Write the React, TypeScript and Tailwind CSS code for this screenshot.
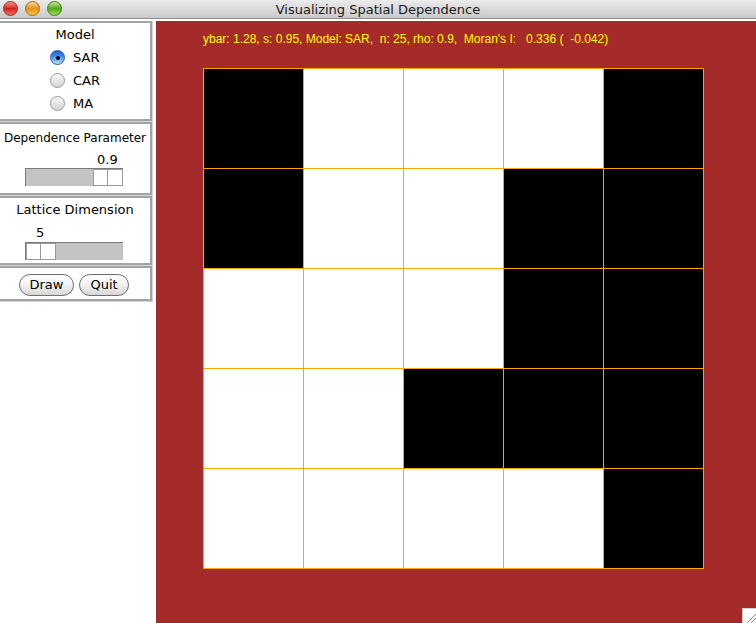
import React from "react"

const ui = { fontFamily: '"DejaVu Sans", "Liberation Sans", sans-serif' }
const canvasFont = { fontFamily: '"Liberation Sans", Arial, sans-serif' }

const pattern = [
  [1, 0, 0, 0, 1],
  [1, 0, 0, 1, 1],
  [0, 0, 0, 1, 1],
  [0, 0, 1, 1, 1],
  [0, 0, 0, 0, 1],
]

function Light({ color }: { color: "red" | "orange" | "green" }) {
  const fill =
    color === "red"
      ? "border-[#9c302a] from-[#f08c86] via-[#d8201a] to-[#f06a5a]"
      : color === "orange"
        ? "border-[#a06a14] from-[#f8d890] via-[#e49010] to-[#f8c44a]"
        : "border-[#467c1c] from-[#c4ec98] via-[#54a814] to-[#9cdc58]"
  return <div className={`h-[15px] w-[15px] rounded-full border bg-linear-to-b ${fill}`} />
}

function Radio({ label, checked }: { label: string; checked?: boolean }) {
  return (
    <div className="flex h-[23px] items-center gap-[8px] pl-[50px]">
      {checked ? (
        <div className="flex h-[15px] w-[15px] items-center justify-center rounded-full border border-[#2e5ea8] bg-linear-to-b from-[#1c5fd0] via-[#4f96ec] to-[#b8e2ff]">
          <div className="h-[4px] w-[4px] rounded-full bg-black" />
        </div>
      ) : (
        <div className="h-[15px] w-[15px] rounded-full border border-[#9a9a9a] bg-linear-to-b from-[#fafafa] to-[#d4d4d4]" />
      )}
      <span className="text-[13px] text-black">{label}</span>
    </div>
  )
}

function Panel({ children, className }: { children: React.ReactNode; className?: string }) {
  return (
    <div className="border-r-[1px] border-b-[1px] border-[#d6d6d6]">
      <div className={`border-y-2 border-r-2 border-[#a3a3a3] bg-white ${className ?? ""}`}>{children}</div>
    </div>
  )
}

function Slider({ thumbLeft }: { thumbLeft: boolean }) {
  return (
    <div className="ml-[25px] flex h-[18px] w-[98px] border-t border-l border-[#7a7a7a] bg-[#c4c4c4]">
      {thumbLeft ? null : <div className="flex-1" />}
      <div className="flex h-full">
        <div className="w-[15px] border border-[#9a9a9a] bg-white" />
        <div className="w-[15px] border border-l-0 border-[#9a9a9a] bg-white" />
      </div>
      {thumbLeft ? <div className="flex-1" /> : null}
    </div>
  )
}

function Button({ label, w }: { label: string; w: string }) {
  return (
    <div
      className={`${w} flex h-[22px] items-center justify-center rounded-full border border-[#6e6e6e] bg-linear-to-b from-white via-[#f2f2f2] to-[#d6d6d6] text-[13px] text-black`}
    >
      {label}
    </div>
  )
}

export default function App() {
  return (
    <div className="relative flex h-[623px] w-[756px] flex-col overflow-hidden bg-white" style={ui}>
      <div className="relative flex h-[19px] items-center border-b border-[#8d8d8d] bg-linear-to-b from-[#ececec] to-[#c9c9c9]">
        <div className="absolute left-[3px] top-[1px] flex gap-[7px]">
          <Light color="red" />
          <Light color="orange" />
          <Light color="green" />
        </div>
        <div className="w-full pt-[1px] text-center text-[13px] text-[#1a1a1a]">Visualizing Spatial Dependence</div>
      </div>
      <div className="flex flex-1 pt-[2px]">
        <div className="w-[156px] pr-[3px]">
          <Panel className="h-[100px] pt-[4px]">
            <div className="mb-[3px] text-center text-[13px] leading-[16px] text-black">Model</div>
            <Radio label="SAR" checked />
            <Radio label="CAR" />
            <Radio label="MA" />
          </Panel>
          <Panel className="h-[73px] pt-[6px]">
            <div className="text-center text-[12px] leading-[16px] text-black">Dependence Parameter</div>
            <div className="mt-[6px] pl-[97px] text-[13px] leading-[16px] text-black">0.9</div>
            <div className="mt-0">
              <Slider thumbLeft={false} />
            </div>
          </Panel>
          <Panel className="h-[69px] pt-[4px]">
            <div className="text-center text-[13px] leading-[16px] text-black">Lattice Dimension</div>
            <div className="mt-[7px] pl-[36px] text-[13px] leading-[16px] text-black">5</div>
            <div className="mt-[1px]">
              <Slider thumbLeft />
            </div>
          </Panel>
          <Panel className="flex h-[35px] items-start gap-[5px] pt-[6px] pl-[19px]">
            <Button label="Draw" w="w-[55px]" />
            <Button label="Quit" w="w-[50px]" />
          </Panel>
        </div>
        <div className="relative flex-1 bg-[#a52a2a] pl-[47px] pt-[11px]" style={canvasFont}>
          <div className="whitespace-pre text-[12px] leading-[14px] text-[#ffff00]">
            {"ybar: 1.28, s: 0.95, Model: SAR,  n: 25, rho: 0.9,  Moran's I:   0.336 (  -0.042)"}
          </div>
          <div className="mt-[22px] grid w-[501px] grid-cols-5 gap-px bg-[#ffa500] p-px">
            {pattern.flat().map((v, i) => (
              <div key={i} className={`h-[99px] ${v ? "bg-black" : "bg-white"}`} />
            ))}
          </div>
          <div className="absolute right-0 bottom-0 h-[15px] w-[14px] border-t border-l border-[#cfcfcf] bg-white">
            <svg width="14" height="15" viewBox="0 0 14 15">
              <path d="M4 14 L13 5 M8 14 L13 9" stroke="#8a8a8a" strokeWidth="1" />
            </svg>
          </div>
        </div>
      </div>
    </div>
  )
}
